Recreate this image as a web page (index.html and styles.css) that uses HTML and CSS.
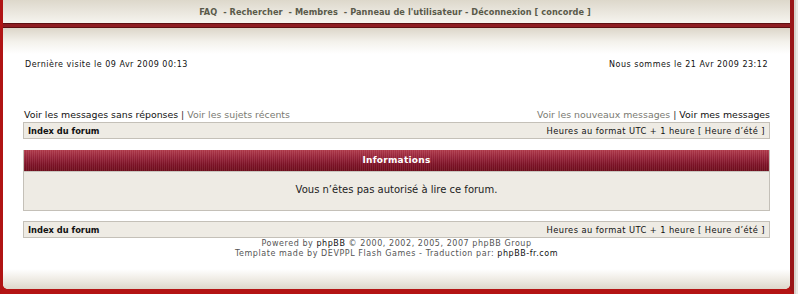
FILE: index.html
```html
<!DOCTYPE html>
<html lang="fr">
<head>
<meta charset="utf-8">
<title>Forum</title>
<link rel="stylesheet" href="styles.css">
</head>
<body>
<div class="frame">
  <div class="inner">
    <div class="topnav">
      <a href="#">FAQ</a>&nbsp; - <a href="#">Rechercher</a>&nbsp; - <a href="#">Membres</a>&nbsp; - <a href="#">Panneau de l'utilisateur</a> - <a href="#">Déconnexion [ concorde ]</a>
    </div>
    <div class="redbar"></div>
    <div class="content">
      <div class="visits">
        <span>Dernière visite le 09 Avr 2009 00:13</span>
        <span>Nous sommes le 21 Avr 2009 23:12</span>
      </div>
      <div class="links">
        <span><a class="dark" href="#">Voir les messages sans réponses</a> | <a class="light" href="#">Voir les sujets récents</a></span>
        <span><a class="light" href="#">Voir les nouveaux messages</a> | <a class="dark" href="#">Voir mes messages</a></span>
      </div>
      <div class="navbox">
        <b>Index du forum</b>
        <span>Heures au format UTC + 1 heure [ Heure d’été ]</span>
      </div>
      <div class="info">
        <div class="info-head">Informations</div>
        <div class="info-body">Vous n’êtes pas autorisé à lire ce forum.</div>
      </div>
      <div class="navbox">
        <b>Index du forum</b>
        <span>Heures au format UTC + 1 heure [ Heure d’été ]</span>
      </div>
      <div class="footer">
        <div>Powered by <a href="#">phpBB</a> © 2000, 2002, 2005, 2007 phpBB Group</div>
        <div>Template made by DEVPPL Flash Games - Traduction par: <a href="#">phpBB-fr.com</a></div>
      </div>
    </div>
    <div class="bottom"></div>
  </div>
</div>
</body>
</html>
```
FILE: styles.css
```css
html, body {
  margin: 0;
  padding: 0;
  background: #ffffff;
  font-family: "DejaVu Sans", Verdana, sans-serif;
}
a { text-decoration: none; }
.frame {
  width: 787px;
  background: #b41414;
  border-left: 3px solid #b01414;
  border-right: 4px solid #9a1518;
  border-bottom: 5px solid #b41414;
  box-shadow: 2px 0 0 #d8d2cc, 4px 0 0 #ece8e4;
}
.inner {
  background: #ffffff;
  border-radius: 0 0 5px 5px;
  overflow: hidden;
}
.topnav {
  height: 23px;
  line-height: 24px;
  text-align: center;
  font-size: 8.2px;
  font-weight: bold;
  letter-spacing: 0.07px;
  color: #5a5a4a;
  background: linear-gradient(#ddd8cb, #f6f4ef);
  padding-right: 3px;
}
.topnav a { color: #5a5a4a; }
.redbar {
  height: 3px;
  background: #8e1d22;
  border-top: 1px solid #5e0f12;
  border-bottom: 1px solid #5e0f12;
}
.content {
  background: linear-gradient(#dcd6c9 0, #f4f2ec 14px, #ffffff 26px);
  padding: 30px 20px 0 20px;
}
.visits {
  display: flex;
  justify-content: space-between;
  font-size: 8px;
  letter-spacing: 0.5px;
  color: #111;
  padding: 0 2px 0 2px;
  height: 14px;
  line-height: 14px;
}
.links {
  display: flex;
  justify-content: space-between;
  margin-top: 36px;
  font-size: 9.4px;
  height: 14px;
  line-height: 14px;
  padding: 0 0 0 1px;
}
.links a.dark { color: #111; }
.links a.light { color: #7a7a72; }
.links span { color: #333; }
.navbox {
  display: flex;
  justify-content: space-between;
  align-items: center;
  height: 15px;
  border: 1px solid #c4c0b8;
  background: #eeebe4;
  font-size: 8.3px;
  padding: 0 4px;
  color: #111;
}
.navbox b { font-weight: bold; }
.navbox span { letter-spacing: 0.42px; }
.info {
  margin-top: 11px;
  border: 1px solid #c4c0b8;
  border-top: none;
}
.info-head {
  height: 21px;
  line-height: 21px;
  text-align: center;
  color: #ffffff;
  font-weight: bold;
  font-size: 9px;
  letter-spacing: 0.25px;
  background:
    repeating-linear-gradient(90deg, rgba(255,255,255,0.08) 0 1px, rgba(0,0,0,0.03) 1px 2px),
    linear-gradient(#b13a4b 0, #98243a 35%, #7e1226 70%, #6e0d1c 100%);
  border-bottom: 1px solid #c9c5be;
}
.info-body {
  height: 38px;
  line-height: 36px;
  text-align: center;
  font-size: 10px;
  color: #222;
  background: #eeebe4;
}
.info + .navbox { margin-top: 10px; }
.footer {
  text-align: center;
  font-size: 8px;
  color: #555;
  line-height: 10px;
  padding-top: 1px;
  letter-spacing: 0.56px;
}
.footer a { color: #111; }
.bottom {
  height: 20px;
  margin-top: 10px;
  background: linear-gradient(#ffffff, #f1eee8 45%, #ddd7cb);
}
```
